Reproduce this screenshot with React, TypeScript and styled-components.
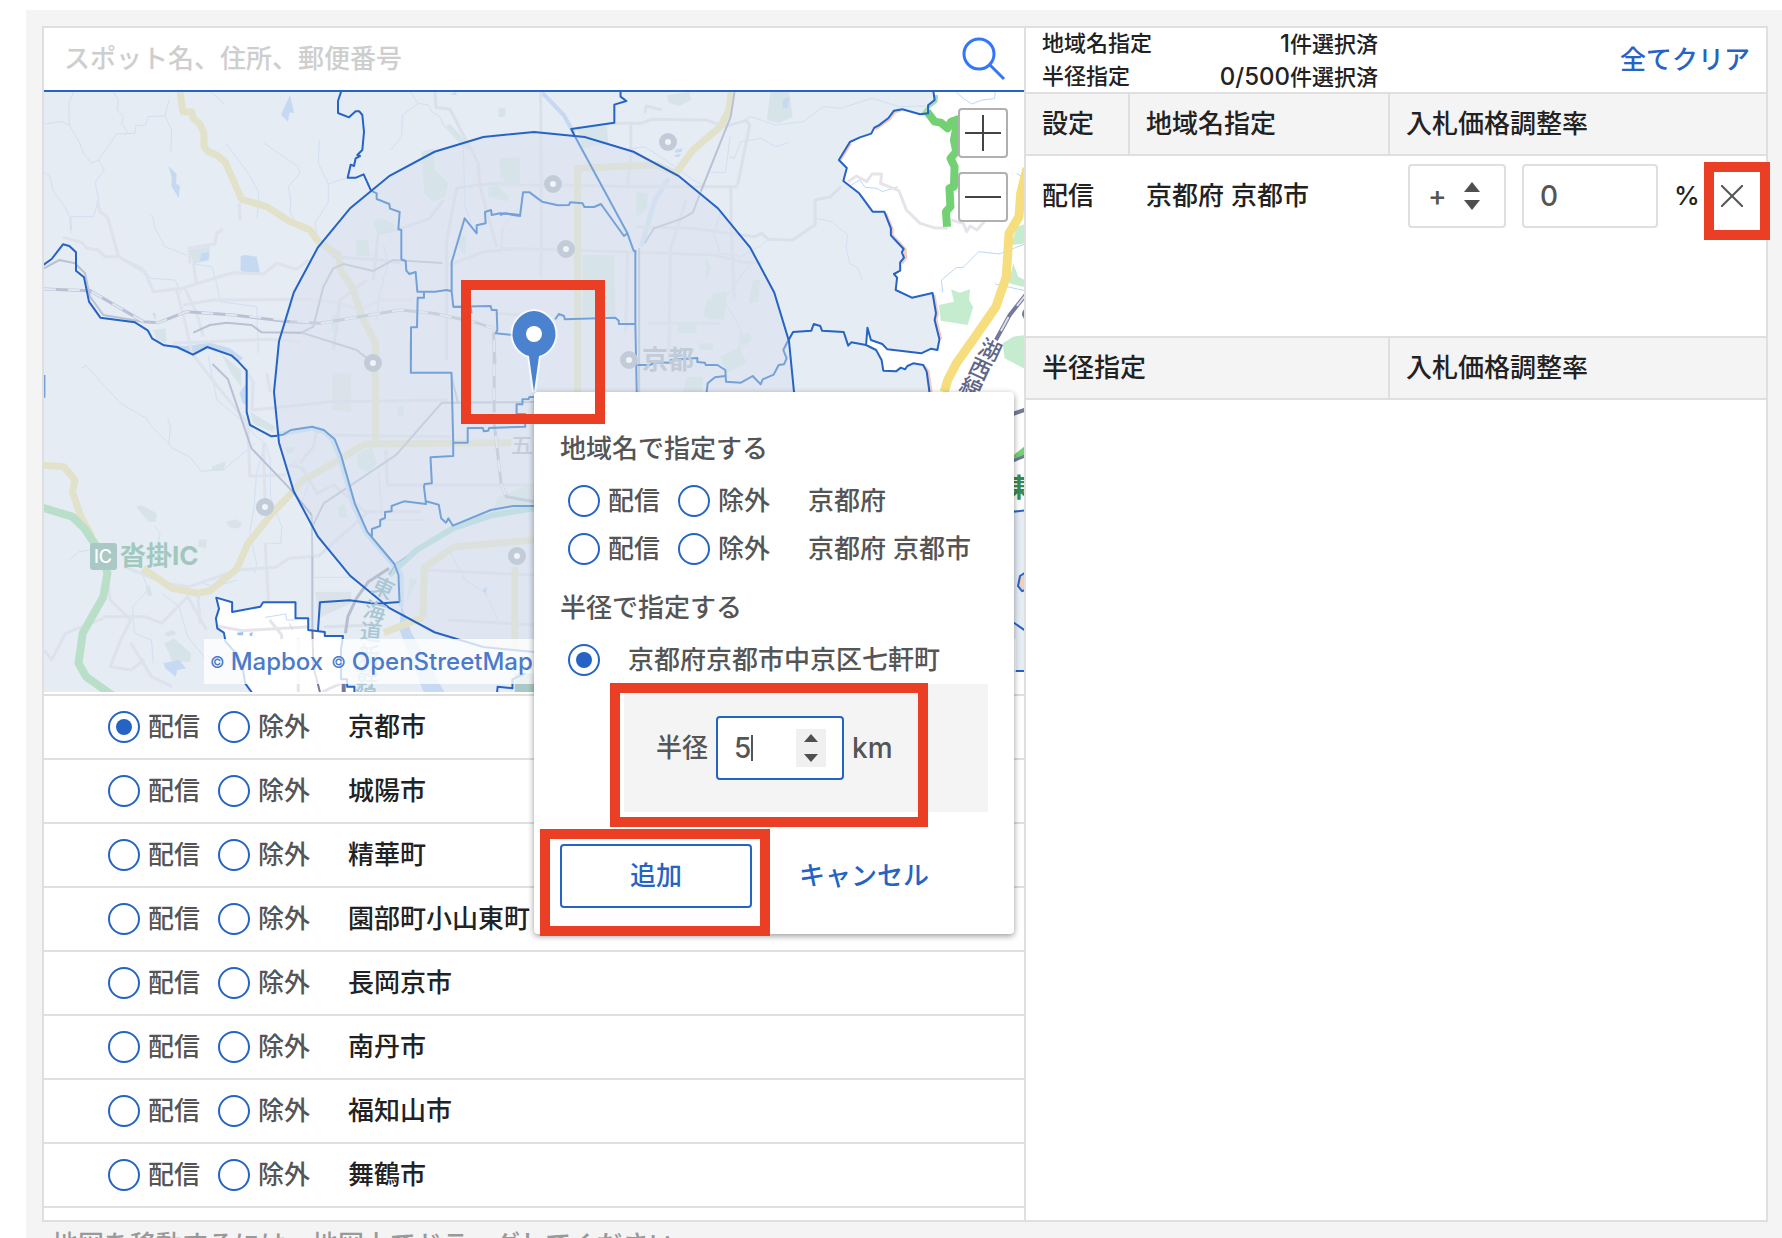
import React, { useState } from "react";
import styled, { createGlobalStyle } from "styled-components";

const BLUE = "#2563c4";
const LINE = "#dfdfdf";
const GRAY = "#f4f4f4";
const INK = "#222";
const SUB = "#555";

const GlobalStyle = createGlobalStyle`
  *, *::before, *::after { box-sizing: border-box; }
  body {
    margin: 0;
    background: #fff;
    color: ${INK};
    font-family: Inter, "Noto Sans CJK JP", sans-serif;
    font-size: 26px;
    font-weight: 500;
    line-height: 38px;
  }
  button, input, select { font: inherit; color: inherit; margin: 0; }
  h2, p, ul, dl, dd, dt, fieldset { margin: 0; padding: 0; border: 0; font: inherit; }
`;

const Page = styled.main`
  height: 100vh;
  overflow: hidden;
  padding: 10px 0 0 26px;
`;

const Surface = styled.div`
  min-height: 100%;
  padding: 16px 14px 0 16px;
  background: ${GRAY};
`;

const Frame = styled.div`
  display: grid;
  grid-template-columns: minmax(0, 1fr) 742px;
  border: 2px solid ${LINE};
  background: #fff;
`;

const Note = styled.p`
  padding: 4px 10px;
  color: #999;
  white-space: nowrap;
`;

/* ---------- left column ---------- */

const SearchBar = styled.form`
  display: flex;
  align-items: center;
  height: 64px;
  padding: 0 18px 0 20px;
  border-bottom: 2px solid ${BLUE};
`;

const SearchInput = styled.input`
  flex: 1;
  min-width: 0;
  padding: 0;
  border: 0;
  outline: 0;
  background: transparent;
  &::placeholder { color: #cecece; opacity: 1; }
`;

const PlainButton = styled.button`
  display: flex;
  align-items: center;
  justify-content: center;
  padding: 0;
  border: 0;
  background: transparent;
  color: ${BLUE};
  cursor: pointer;
`;

const MapArea = styled.section`
  position: relative;
  height: 600px;
  margin-bottom: 2px;
`;

const MapSvg = styled.svg`
  display: block;
  width: 100%;
  height: 100%;
`;

const ZoomGroup = styled.div`
  position: absolute;
  top: 16px;
  right: 16px;
  display: grid;
  gap: 14px;
`;

const ZoomButton = styled(PlainButton)`
  width: 50px;
  height: 50px;
  border: 2px solid #b0b0b0;
  border-radius: 4px;
  background: #fff;
`;

const Credits = styled.div`
  position: absolute;
  left: 160px;
  right: 8px;
  bottom: 8px;
  display: flex;
  align-items: center;
  gap: 8px;
  height: 45px;
  padding-left: 6px;
  background: rgba(255, 255, 255, 0.78);
  font-size: 24px;
`;

const Credit = styled.a`
  display: flex;
  align-items: center;
  gap: 6px;
  color: #4b7acb;
  text-decoration: none;
`;

const Mark = styled.small`
  font-size: 16px;
`;

const AreaList = styled.ul`
  list-style: none;
  margin-bottom: 12px;
  border-bottom: 2px solid ${LINE};
`;

const AreaItem = styled.li`
  height: 64px;
  padding-left: 64px;
  border-top: 2px solid ${LINE};
`;

const Choice = styled.div`
  display: flex;
  align-items: center;
  gap: 18px;
  height: 100%;
`;

const RadioLabel = styled.label<{ $gap?: number }>`
  display: flex;
  align-items: center;
  gap: ${(p) => p.$gap ?? 8}px;
  color: ${SUB};
  white-space: nowrap;
`;

const Radio = styled.input`
  display: grid;
  place-items: center;
  width: 32px;
  height: 32px;
  appearance: none;
  border: 2px solid ${BLUE};
  border-radius: 50%;
  background: #fff;
  &:checked::before {
    content: "";
    width: 16px;
    height: 16px;
    border-radius: 50%;
    background: ${BLUE};
  }
`;

const AreaName = styled.span<{ $soft?: boolean }>`
  margin-left: 20px;
  color: ${(p) => (p.$soft ? SUB : INK)};
  white-space: nowrap;
`;

/* ---------- popup on the map ---------- */

const Popup = styled.section`
  position: absolute;
  z-index: 2;
  top: 50%;
  left: 50%;
  width: 480px;
  padding: 38px 26px 26px;
  border-radius: 4px;
  background: #fff;
  box-shadow: 0 2px 6px rgba(0, 0, 0, 0.4);
  color: ${SUB};
`;

const PopupTitle = styled.h2<{ $spaced?: boolean }>`
  margin: ${(p) => (p.$spaced ? 16 : 0)}px 0 9px;
`;

const PopupRow = styled.div`
  display: flex;
  align-items: center;
  height: 48px;
  padding-left: 8px;
`;

const RadiusBox = styled.div`
  position: relative;
  display: flex;
  align-items: center;
  gap: 8px;
  height: 128px;
  margin-left: 64px;
  padding-left: 32px;
  background: ${GRAY};
`;

const Unit = styled.span`
  font-size: 28px;
`;

const Field = styled.span`
  position: relative;
  display: inline-flex;
  flex: none;
  align-items: center;
`;

const TextBox = styled.input<{ $active?: boolean; $w: number }>`
  flex: none;
  width: ${(p) => p.$w}px;
  height: 64px;
  padding: 0 16px;
  border: 2px solid ${(p) => (p.$active ? BLUE : LINE)};
  border-radius: 4px;
  outline: 0;
  background: #fff;
  color: ${SUB};
  font-size: 28px;
  appearance: textfield;
  &::-webkit-inner-spin-button { display: none; }
`;

const Caret = styled.i`
  position: absolute;
  left: 35px;
  width: 2px;
  height: 26px;
  background: ${SUB};
`;

const Stepper = styled.span`
  position: absolute;
  right: 18px;
  display: flex;
  align-items: center;
  justify-content: center;
  width: 30px;
  height: 38px;
  background: #f0f0f0;
`;

const Actions = styled.div`
  display: flex;
  gap: 16px;
  margin-top: 32px;
`;

const ActionButton = styled(PlainButton)<{ $outlined?: boolean }>`
  position: relative;
  width: 192px;
  height: 64px;
  border: 2px solid ${(p) => (p.$outlined ? BLUE : "transparent")};
  border-radius: 4px;
`;

/* Red rectangle laid over the part that the guide points at. */
const Highlight = styled.span<{ $x: number; $y: number; $w: number; $h: number }>`
  position: absolute;
  z-index: 3;
  left: ${(p) => p.$x}px;
  top: ${(p) => p.$y}px;
  width: ${(p) => p.$w}px;
  height: ${(p) => p.$h}px;
  border: 10px solid #eb3f25;
  pointer-events: none;
`;

/* ---------- right column ---------- */

const Side = styled.section`
  border-left: 2px solid ${LINE};
`;

const SideHead = styled.header`
  display: flex;
  align-items: center;
  justify-content: space-between;
  height: 66px;
  padding: 0 16px;
  border-bottom: 2px solid ${LINE};
`;

const Counts = styled.dl`
  display: grid;
  grid-template-columns: auto auto;
  justify-content: space-between;
  width: 336px;
  font-size: 22px;
  line-height: 33px;
`;

const CountValue = styled.dd`
  height: 33px;
  text-align: right;
`;

const Figure = styled.span`
  font-size: 24px;
`;

const Table = styled.table`
  width: 100%;
  table-layout: fixed;
  border-collapse: separate;
  border-spacing: 0;
`;

const Th = styled.th<{ $top?: boolean }>`
  height: ${(p) => (p.$top ? 64 : 62)}px;
  padding: 0 14px 0 16px;
  border-top: ${(p) => (p.$top ? 2 : 0)}px solid ${LINE};
  border-bottom: 2px solid ${LINE};
  background: ${GRAY};
  font-weight: 500;
  text-align: left;
  &:not(:last-child) { border-right: 2px solid ${LINE}; }
`;

const Td = styled.td<{ $controls?: boolean }>`
  height: 180px;
  padding: 8px 0 0 ${(p) => (p.$controls ? 18 : 16)}px;
  vertical-align: top;
`;

const CellLine = styled.div`
  display: flex;
  align-items: center;
  gap: 16px;
  height: 64px;
  white-space: nowrap;
`;

const Percent = styled.span`
  flex: none;
  width: 24px;
`;

const Sign = styled.select`
  width: 98px;
  height: 64px;
  padding: 0 18px;
  appearance: none;
  border: 2px solid ${LINE};
  border-radius: 4px;
  background: #fff;
  color: ${SUB};
  font-size: 28px;
`;

const SignArrows = styled.span`
  position: absolute;
  right: 26px;
  display: flex;
  pointer-events: none;
`;

const RemoveButton = styled(PlainButton)`
  position: relative;
  flex: none;
  width: 36px;
  height: 64px;
`;

const Arrows = ({ w, h, tip }: { w: number; h: number; tip: number }) => (
  <svg width={w} height={h} viewBox={`0 0 ${w} ${h}`} fill="#4f4f4f" aria-hidden="true">
    <path d={`M${w / 2} 0L${w} ${tip}H0Z`} />
    <path d={`M${w / 2} ${h}L${w} ${h - tip}H0Z`} />
  </svg>
);

const NS = { vectorEffect: "non-scaling-stroke" as const };

const Lines = ({ d, color, w = 2, dash }: { d: string[]; color: string; w?: number; dash?: string }) => (
  <g fill="none" stroke={color} strokeWidth={w} strokeDasharray={dash} strokeLinejoin="round">
    {d.map((p) => (
      <polyline key={p} points={p} {...NS} />
    ))}
  </g>
);

const Shapes = ({ d, color }: { d: string[]; color: string }) => (
  <g fill={color}>
    {d.map((p) => (
      <polygon key={p} points={p} />
    ))}
  </g>
);

/* The map is charted in four sheets; each one has its own origin and scale. */
const NW = "scale(.33333)";
const NE = "translate(500 0) scale(.34439 .33333)";
const SW = "translate(0 340) scale(.34439 .33333)";
const MID = "translate(440 260) scale(.33333)";

const ring = Array.from({ length: 32 }, (_, i) => {
  const a = (i * Math.PI) / 16;
  return `${(534 + 260 * Math.sin(a)).toFixed(1)},${(392 - 260 * Math.cos(a)).toFixed(1)}`;
}).join(" ");

const eastEdge =
  "1258,270 1262,300 1243,316 1243,340 1220,343 1168,328 1144,332 1128,354 1100,376 1087,383 1078,401 1045,412 1016,426 984,480 1007,504 997,543 1043,580 1082,635 1116,635 1135,685 1135,706 1172,747 1167,757 1173,773 1162,787 1162,812 1144,822 1153,833 1149,870 1196,893 1256,879 1266,940 1262,960 1276,1018 1270,1050 1252,1046 1223,1060 1125,1048 1110,1032 1077,1020 1067,983 1063,1035 1092,1050 1108,1080 1113,1112 1150,1114 1164,1103 1176,1108 1183,1098 1200,1090 1229,1095 1239,1115 1247,1176";

const southHole =
  "733,1060 712,1030 706,990 690,945 655,905 650,878 631,865 627,835 636,806 628,773 674,787 674,816 756,800 764,787 858,787 858,835 895,835 895,870 943,876 943,888 996,888 990,930 990,1018 1008,1018 1008,1040 1029,1040 1029,1060";

const stations = [
  [668, 142],
  [553, 184],
  [566, 249],
  [373, 363],
  [265, 507],
  [517, 556],
  [629, 360],
];

const tokaido: [string, number, number, number][] = [
  ["東", 383, 588, 25],
  ["海", 375, 611, 15],
  ["道", 371, 632, 5],
  ["新", 369, 655, 0],
  ["幹", 367, 678, 0],
  ["線", 366, 696, 0],
];

const kosei: [string, number, number][] = [
  ["湖", 990, 350],
  ["西", 980, 369],
  ["線", 971, 388],
];

const KyotoMap = () => (
  <MapSvg viewBox="44 92 980 600" preserveAspectRatio="xMidYMid slice" role="img" aria-label="京都市の地図">
    <rect x="-956" y="-908" width="2980" height="2600" fill="#e5ecf4" />
    <polygon points={ring} fill="#dfe6f1" />

    <g transform={NW}>
      <Shapes
        color="#d6e4e9"
        d={[
          "1265,455 1300,445 1305,510 1345,550 1335,590 1300,605 1272,580",
          "1337,378 1350,372 1400,425 1408,452 1385,435",
          "1495,325 1516,325 1516,350 1495,352",
          "1498,485 1560,472 1560,545 1520,545 1500,515",
          "1465,560 1490,555 1527,590 1525,605 1465,590",
          "1120,660 1150,655 1185,675 1180,695 1130,698",
          "1068,720 1105,720 1110,768 1068,768",
          "1380,700 1400,710 1395,770 1375,740",
          "570,750 630,740 628,780 580,792",
          "460,990 497,985 500,1030 470,1020",
          "995,945 1018,940 1015,1000 995,990",
        ]}
      />
      <Shapes
        color="#c5d9f2"
        d={[
          "870,285 882,338 868,338 864,365 843,344",
          "505,498 530,522 528,550 540,558 536,594 514,558 515,530",
          "722,768 735,765 770,770 780,818 760,822 722,812",
          "605,760 628,755 625,780 598,785",
          "457,940 466,940 468,960",
          "1352,285 1365,276 1372,284",
          "490,1035 531,1046 579,1068 622,1045 690,1068 714,1085 730,1075 690,1045 630,1028 560,1038",
        ]}
      />
      <Lines
        color="#d2e0f3"
        w={1}
        d={[
          "220,276 207,310 208,375 240,430 250,460 275,490 295,480 313,510 285,547 297,600 280,650 212,650 215,690",
          "132,372 185,365 208,375",
          "295,480 350,402 405,400 408,375 435,378 445,350 495,347 515,390 512,458",
          "340,276 355,300 352,330 370,350 365,370 382,395 375,404",
          "132,517 150,530 160,575 195,620 210,652 212,700",
          "495,347 507,300",
          "635,276 672,311",
          "678,430 745,520 775,575 775,620 770,655",
          "793,430 865,480 895,500 900,520 865,560 872,600 870,635 880,655",
          "958,423 955,490 985,552 985,605 945,670 950,700",
          "985,552 1020,540 1038,535",
          "448,640 460,655 463,680 495,740 560,765",
          "350,765 400,790 430,805 450,835 525,840 545,880",
          "580,792 635,800 650,850 660,905 770,920 775,1060",
          "1230,276 1255,310 1208,345 1205,410 1172,450",
          "1255,310 1285,315 1295,335 1320,350 1330,375 1390,440 1395,620 1415,670",
          "1150,730 1165,790 1150,840 1135,900 1130,960",
          "1560,620 1510,680 1500,760",
        ]}
      />
      <Lines
        color="#dde2ec"
        w={3}
        d={[
          "292,602 300,635 322,650 355,768",
          "188,712 245,727 260,745 295,750 315,770 355,770 435,817 460,875 545,865 675,825 700,818 790,822 830,790 890,808 925,780",
          "570,790 568,745 645,732 650,700 668,688",
          "580,790 590,850",
          "718,610 720,660",
          "530,870 560,985 575,1060",
          "555,865 590,940 610,1010",
          "550,915 640,900 920,898 1000,905 1080,930 1140,900 1240,900",
          "520,1030 800,1018 900,1025",
        ]}
      />
      <Lines
        color="#d9e0eb"
        w={3}
        d={[
          "1305,276 1308,322 1350,328 1435,490 1440,560 1490,740",
          "1340,1080 1340,720 1370,565 1430,555 1560,545",
          "1120,840 1135,700 1190,690 1290,655 1330,600",
          "1350,795 1450,755 1560,745",
          "960,725 1000,770 1140,780 1200,790",
          "1000,1050 1020,900 1100,840",
          "1490,940 1560,945",
        ]}
      />
      <Lines
        color="#e2e2cb"
        w={7}
        d={["540,270 548,335 575,335 580,355 598,370 612,400 612,440 625,455 650,465 675,485 725,598 800,620 865,662 930,690 955,725"]}
      />
      <Lines color="#dde1dc" w={7} d={["955,725 1015,765 1022,810 1060,870 1085,950 1125,1025 1130,1080"]} />
      <Lines
        color="#b9c1d5"
        w={2}
        d={[
          "132,805 178,780 225,790 255,820 270,890 310,945 430,965",
          "580,998 630,975 680,968 755,975 785,997 905,998",
        ]}
      />
      <Lines
        color="#c6d0de"
        w={2}
        d={[
          "905,998 940,980 970,860 1000,805 1030,792 1120,813 1180,780 1327,789",
          "905,998 1070,1050 1120,1090",
        ]}
      />
      <Lines color="#b9c1d5" w={3} d={["132,867 270,872 430,965 475,968 560,935 700,945 870,965"]} />
      <Lines color="#c6d0de" w={3} d={["870,965 960,970 1200,930 1300,940 1420,965 1480,985 1485,1090"]} />
      <Lines
        color="#e3e8f0"
        w={2}
        dash="12 12"
        d={["132,867 270,872 430,965 475,968 560,935 700,945 960,970 1200,930 1300,940 1420,965 1480,985 1485,1090"]}
      />
    </g>

    <g transform={SW}>
      <Shapes color="#dce2ea" d={["915,755 1020,755 1020,790 925,835", "655,545 685,538 702,548 695,565 670,565", "578,600 600,598 598,625 575,620", "965,100 1020,100 1020,215 965,210"]} />
      <Shapes
        color="#d6e4e9"
        d={[
          "395,500 410,495 455,520 453,545 430,545",
          "615,380 655,364 650,392 615,392",
          "478,880 500,870 515,882 485,890",
          "478,910 505,895 555,940 553,965 500,965",
          "422,740 435,735 442,765 430,770",
          "1035,345 1080,320 1095,370 1070,400 1040,380",
          "1155,200 1173,200 1170,230 1155,225",
          "980,500 1000,490 1010,535 985,530",
          "645,45 700,90 700,140 670,100",
          "725,215 800,260 790,275 735,250",
          "1445,470 1551,430 1551,500 1430,520",
          "1190,715 1213,720 1180,790",
          "828,320 858,320 850,340 830,338",
        ]}
      />
      <Shapes color="#c5d9f2" d={["475,970 520,960 540,985 515,990 510,1010 480,985", "695,160 715,130 715,195 705,190", "1165,790 1195,880 1290,1056 1230,1056 1160,870", "1400,750 1415,740 1410,765"]} />
      <Lines
        color="#d2e0f3"
        w={1}
        d={[
          "235,85 250,77 350,190 425,235 440,260 495,315 500,325 550,350 585,394 650,388 740,310",
          "487,235 495,260 490,315",
          "605,50 630,180 700,240 745,290 770,310 745,400 738,500 725,580 745,670 740,700",
          "770,310 785,360 785,470 818,560 815,610 770,610",
          "450,560 465,580 455,625",
          "200,660 230,635 260,630",
          "410,690 430,750 385,800 390,880 440,900 445,970",
          "470,760 520,800 545,890 600,960",
          "590,730 620,740 690,720",
          "912,712 1020,712",
          "1100,400 1110,540 1240,540",
          "1310,640 1350,720 1410,760 1450,850",
          "850,360 900,420 880,480",
        ]}
      />
      <Lines
        color="#dde2ec"
        w={3}
        d={[
          "560,44 640,150 720,250 725,408 830,405",
          "765,310 770,490",
          "770,610 783,840 818,880",
          "710,90 735,125 732,210 800,203",
          "775,100 785,155",
          "360,680 480,730 550,740 690,690 800,682 840,655 925,648",
          "300,830 420,830 470,850 545,770 600,870",
          "310,700 320,780 380,840 350,900 320,980 380,990 420,960",
          "128,930 150,960 190,880 300,835",
          "380,910 440,1010 500,1040",
          "575,760 580,850",
        ]}
      />
      <Lines
        color="#d9e0eb"
        w={3}
        d={[
          "800,203 960,185 1300,180",
          "925,648 1070,515",
          "840,375 880,385 920,460 970,435 1060,515 1220,515",
          "920,270 910,320 870,370",
          "960,285 1310,290",
          "1120,330 1125,435 1551,435",
          "1300,840 1551,855",
          "940,860 1100,855",
          "1230,690 1551,705",
        ]}
      />
      <Lines
        color="#e2e2cb"
        w={7}
        d={[
          "120,375 185,380 218,420 210,455 235,530 268,590",
          "415,685 500,745 575,760 610,752 687,688 720,610 790,520 850,455",
          "1228,832 1115,878",
        ]}
      />
      <Lines
        color="#dde1dc"
        w={7}
        d={["850,455 880,420 950,380 1060,312 1485,308", "1090,0 1090,312", "1551,600 1320,620 1232,682 1228,832", "1495,680 1495,930"]}
      />
      <Lines color="#b9dfc8" w={8} d={["120,502 210,530 245,565 300,650 312,700 300,770 240,880 228,970 250,1010 325,1065"]} />
      <Lines
        color="#b9c1d5"
        w={2}
        d={["617,72 662,118 730,325 850,455 905,525", "907,650 907,880"]}
      />
      <Lines
        color="#c6d0de"
        w={2}
        d={["905,525 907,650", "907,560 940,490 1150,345 1283,188 1551,186", "1311,110 1330,190"]}
      />
      <Lines color="#c6d0de" w={3} d={["1435,0 1435,250 1455,430 1470,470 1551,485"]} />
      <Lines color="#e3e8f0" w={2} dash="12 12" d={["1435,0 1435,250 1455,430 1470,470"]} />
      <Lines color="#cbdff0" w={5} d={["806,284 845,275 906,265 940,275 965,298 985,345 1025,490 1060,575 1140,672 1165,705 1165,800"]} />
      <Lines color="#c3dde5" w={6} d={["1551,505 1430,525 1315,565 1210,630 1130,705"]} />
      <Lines color="#b7becd" w={3} d={["1130,685 1070,725 1035,775 1010,830 1003,880"]} />
      <Lines color="#9dc1ea" w={1} d={["1130,705 1150,670 1180,650"]} />

      <polygon points={southHole} fill="#fff" />
      <Lines color="#e6e4ea" w={3} d={["630,858 705,872 895,860", "783,840 818,885 818,900", "866,895 866,1056", "935,1056 990,1030"]} />
      <Lines color="#c5dbf7" w={1} d={["770,832 830,822 832,840 858,840", "840,850 850,870"]} />
      <Lines color="#767a99" w={2} d={["907,870 910,980 929,1056"]} />
      <Lines color="#767a99" w={4} d={["998,1030 998,1060"]} />
      <Shapes color="#9bc2f3" d={["688,878 706,876 706,886 690,886", "724,880 734,876 732,888 726,888"]} />
      <Shapes color="#a9c8c6" d={["1495,1000 1580,1000 1580,1060 1495,1060"]} />
      <Lines color={BLUE} d={[southHole]} />
      <Lines color={BLUE} d={["1160,786 1090,791 1015,781 929,787 923,876", "1443,1060 1445,1040 1488,1045 1488,1018 1525,1000"]} />
      <Lines
        color="#74a2d8"
        d={[
          "806,286 822,284 845,270 906,260 940,270 972,298 990,345 1030,490 1066,575 1145,672 1157,705 1160,786",
          "1193,0 1193,98 1311,98 1316,308 1358,308 1358,264 1402,264 1405,274 1418,272 1420,264 1525,260 1525,222 1500,222 1500,193 1517,193 1517,178 1535,177 1537,171 1551,171",
          "1316,308 1316,348 1250,352 1254,430 1233,432 1231,440 1237,492 1173,484 1137,498 1137,514 1118,516 1118,534 1104,540 1104,558 1080,567 1080,590",
          "1237,484 1274,494 1281,535 1295,548 1302,535 1315,557 1425,510 1490,498 1551,498",
          "129,105 129,173",
        ]}
      />
    </g>

    <g transform={NE}>
      <Shapes
        color="#d6e4e9"
        d={[
          "485,285 550,276 555,300 520,318 490,308",
          "785,276 840,276 850,350 810,370 775,360",
          "222,380 310,378 315,430 240,445",
          "0,475 50,472 60,540 30,550 0,530",
          "240,765 332,765 335,950 240,950",
          "595,770 615,800 598,845",
          "600,900 660,885 650,960 590,950",
          "735,840 755,840 750,905 722,910",
          "515,970 572,975 570,1000 515,1000",
          "395,575 430,580 425,630 395,650",
        ]}
      />
      <Shapes color="#c5d9f2" d={["820,300 840,290 835,325 822,325", "508,450 530,445 528,455 510,458", "508,465 525,462 522,470 508,470"]} />
      <Lines
        color="#d2e0f3"
        w={1}
        d={[
          "690,370 730,350 800,375 880,365 940,320 990,325 1080,295 1160,320 1235,318",
          "665,470 680,475 700,425 760,415 800,440 838,428",
          "360,450 420,440 480,480 560,540 600,560",
          "915,655 965,665 980,680 1010,705 1005,740 1015,790 1040,805 1052,842",
          "780,715 760,735 700,770 640,760 620,700 640,640",
          "610,517 655,517 668,410",
          "690,1080 700,990 650,900 690,840 730,790",
        ]}
      />
      <Lines color="#c5d9f2" w={4} d={["115,270 185,345 215,400"]} />
      <Lines color="#d3e0f1" w={5} d={["490,535 450,600 410,740"]} />
      <Lines
        color="#dbe1eb"
        w={3}
        d={[
          "118,276 120,600 120,750 118,830",
          "332,370 410,370 440,358 600,360 650,380 715,362 725,375 690,555",
          "380,370 380,470 370,560",
          "0,555 160,555 400,560 690,560",
          "0,745 200,750 620,765 700,785 760,790",
          "670,560 672,700 680,900",
          "395,680 560,685 740,710 760,700 780,718 850,720 900,685 915,675 915,600 960,590 990,560",
          "490,1080 495,750 540,600",
          "430,970 640,970",
          "420,340 425,318 470,330",
          "370,760 365,1000",
        ]}
      />
      <Lines color="#e2e2cb" w={7} d={["672,270 665,330 640,380 560,450 510,520"]} />
      <Lines color="#dde1dc" w={7} d={["510,520 455,495 225,505 225,1180"]} />
      <Lines color="#b9c1d5" w={2} d={["681,276 670,350 583,575"]} />
      <Lines color="#c6d0de" w={2} d={["583,575 560,637 530,655 447,685 420,730", "404,745 404,1180"]} />

      <polygon points={`${eastEdge} 1247,1530 1980,1530 1980,0 1258,0`} fill="#fff" />
      <Shapes
        color="#c6ecd0"
        d={[
          "1310,868 1335,878 1365,868 1362,900 1374,922 1358,975 1280,962 1274,915 1318,905",
          "1490,790 1505,830 1524,840 1524,862 1478,850",
          "1500,680 1524,672 1524,730 1485,735",
          "1460,1030 1490,1010 1530,1005 1530,1110 1465,1075",
        ]}
      />
      <Lines
        color="#b9d8f8"
        w={1}
        d={[
          "1325,276 1345,295 1370,312 1400,300 1436,296 1438,276",
          "1020,555 1045,540 1060,562 1095,565 1110,575 1155,560",
          "1285,878 1282,840 1325,803 1345,802 1390,755 1450,762 1524,732",
          "1438,852 1524,872",
          "1500,520 1524,535",
        ]}
      />
      <Lines
        color="#e6e4ea"
        w={3}
        d={["1010,545 1035,528 1065,545 1080,522 1108,522 1105,550 1158,572 1165,590 1180,630 1220,670 1260,683 1300,685", "1310,660 1345,670 1355,695 1365,678 1385,690 1410,660 1440,655"]}
      />
      <Lines color="#f1cdbd" w={3} d={["1163,330 1146,336 1130,358 1090,387", "1018,430 988,480", "1120,640 1139,687 1139,706 1176,747 1178,773 1167,790", "1260,884 1270,940 1266,960 1280,1018", "1233,1100 1243,1115 1252,1176"]} />
      <Lines color="#a4dbb0" w={3} d={["1268,285 1266,305 1240,325 1225,345"]} />
      <Lines color="#73d073" w={8} d={["1240,335 1262,365 1280,368 1300,385 1310,365 1330,358 1318,420 1325,455 1308,475 1320,500 1318,560 1305,565 1308,620 1295,635 1298,680"]} />
      <Lines color="#f6de7e" w={9} d={["1530,505 1512,580 1507,650 1478,700 1470,830 1440,920 1380,1010 1325,1090 1300,1140 1290,1176"]} />
      <Lines color="#747999" w={4} d={["1530,880 1480,945 1440,1020"]} />
      <Lines color="#dedee6" w={2} dash="16 14" d={["1530,880 1480,945 1440,1020"]} />
      <Lines color={BLUE} d={[eastEdge, "350,270 350,290 367,303 332,314 332,368 207,387 217,408", "838,1020 851,996 904,992 911,972 930,978 935,992 998,996 1011,1037 1020,1027 1063,1035"]} />
      <Lines
        color="#74a2d8"
        d={[
          "217,408 370,700 388,752 393,752 393,970 397,1176",
          "0,645 16,640 38,645 58,648 67,577 86,577 122,605 168,616 200,615 204,607 240,610 245,621 273,621 293,612 360,708 370,700",
          "160,958 171,942 186,948 188,958 335,953 345,962 345,972 393,972",
        ]}
      />
    </g>

    <g transform={MID}>
      <Shapes color="#d6e4e9" d={["820,100 860,95 858,160 815,185 790,160", "900,225 930,220 935,240 905,265", "840,290 900,260 920,310 860,340", "740,350 790,350 785,396 730,396", "775,250 820,250 820,270 780,270"]} />
      <Lines
        color="#74a2d8"
        d={[
          "592,315 630,315 645,307 690,308 692,300 772,294 772,306 795,308 797,315 832,315 856,330 858,365 903,368 938,348 962,373 968,358 1001,344 1016,315 1032,313 1040,295 1030,270 1045,240",
          "856,348 825,352 803,370 800,396",
        ]}
      />
    </g>

    <g transform={NW}>
      <Lines
        color="#74a2d8"
        d={[
          "1113,572 1130,580 1130,597 1168,612 1170,626 1199,636 1195,688 1204,690 1204,778 1217,783 1219,812 1228,822 1247,816 1252,875 1305,875 1340,870 1355,874",
          "1272,877 1272,893 1253,893 1251,982 1233,982 1233,1080",
          "1415,940 1412,922 1360,920 1355,874 1355,787 1394,655 1430,700 1430,676 1457,670 1455,636 1473,630 1475,645 1500,640 1535,642 1560,645",
          "1360,920 1472,918 1475,930 1490,930 1492,990 1487,1000 1545,1006",
        ]}
      />
      <Lines
        color={BLUE}
        d={["1025,270 1014,303 1014,339 1047,352 1067,334 1078,334 1087,345 1092,396 1087,450 1072,465 1080,468 1067,475 1062,498 1052,494 1043,533 1068,533 1091,523 1113,572"]}
      />
      <Lines
        color={BLUE}
        w={2}
        d={["120,802 155,777 189,733 208,738 228,757 228,812 252,832 267,905 301,953 405,967 443,991 457,1016 492,1036 531,1041 579,1064 622,1041 694,1066 714,1084 740,1112 740,1236 750,1275 814,1309 832,1307"]}
      />
    </g>

    <g>
      <rect x="1010" y="510" width="20" height="162" fill="#e5ecf4" />
      <rect x="1010" y="672" width="20" height="20" fill="#fff" />
      <path d="M1010 512L1030 510M1010 620L1030 634M1010 671H1030" stroke={BLUE} strokeWidth="2" fill="none" />
      <path d="M1026 572L1020 576 1018 586 1022 591 1030 589" stroke={BLUE} strokeWidth="2" fill="#f1cdbd" />
      <path d="M1010 415L1030 408" stroke="#747999" strokeWidth="4" />
      <path d="M1010 458L1030 442V456L1010 462Z" fill="#73d073" />
      <path d="M1010 462L1030 454" stroke="#747999" strokeWidth="3" />
      <circle cx="1028" cy="314" r="6" fill="#747999" />
    </g>

    <polygon points={ring} fill="none" stroke={BLUE} strokeWidth="2" />

    <g>
      {stations.map(([x, y]) => (
        <circle key={`${x}-${y}`} cx={x} cy={y} r="6" fill="#f0f3f8" stroke="#c2ccd9" strokeWidth="6" />
      ))}
    </g>
    <g textAnchor="middle" dominantBaseline="central" fontSize="22">
      <g fill="#a9c6d5">
        {tokaido.map(([c, x, y, r]) => (
          <text key={c} x={x} y={y} transform={`rotate(${r} ${x} ${y})`}>
            {c}
          </text>
        ))}
      </g>
      <g fill="#5f6689">
        {kosei.map(([c, x, y]) => (
          <text key={c} x={x} y={y} transform={`rotate(25 ${x} ${y})`}>
            {c}
          </text>
        ))}
      </g>
      <text x="522" y="445" fill="#c4cdda">五</text>
      <text x="668" y="359" fontSize="26" fontWeight="700" fill="#c2ccd9">京都</text>
      <text x="1019" y="487" fontSize="26" fontWeight="700" fill="#3a8a4f">東</text>
    </g>
    <rect x="90" y="543" width="27" height="27" rx="3" fill="#a9c8c6" />
    <text x="103" y="563" textAnchor="middle" fontSize="18" fill="#fff">IC</text>
    <text x="120" y="565" fontSize="26" fontWeight="700" fill="#a1c8bd">沓掛IC</text>

    <g>
      <path
        d="M534 311a23 23 0 0 0-5 45L534 392L539 356a23 23 0 0 0-5-45Z"
        fill="#4a82cf"
        stroke="#fff"
        strokeOpacity=".7"
        strokeWidth="4"
        paintOrder="stroke"
      />
      <circle cx="534" cy="334" r="8" fill="#fff" />
    </g>
  </MapSvg>
);

type Mode = "on" | "off" | "";

const ModePicker = ({ name, area, initial = "", soft }: { name: string; area: string; initial?: Mode; soft?: boolean }) => {
  const [mode, setMode] = useState<Mode>(initial);
  return (
    <Choice role="radiogroup" aria-label={area}>
      <RadioLabel>
        <Radio type="radio" name={name} checked={mode === "on"} onChange={() => setMode("on")} />
        配信
      </RadioLabel>
      <RadioLabel>
        <Radio type="radio" name={name} checked={mode === "off"} onChange={() => setMode("off")} />
        除外
      </RadioLabel>
      <AreaName $soft={soft}>{area}</AreaName>
    </Choice>
  );
};

const areas = ["京都市", "城陽市", "精華町", "園部町小山東町", "長岡京市", "南丹市", "福知山市", "舞鶴市"];

const RadiusPopup = () => (
  <Popup>
    <Highlight $x={-73} $y={-112} $w={144} $h={144} />
    <PopupTitle>地域名で指定する</PopupTitle>
    <PopupRow>
      <ModePicker name="pref" area="京都府" soft />
    </PopupRow>
    <PopupRow>
      <ModePicker name="city" area="京都府 京都市" soft />
    </PopupRow>
    <PopupTitle $spaced>半径で指定する</PopupTitle>
    <PopupRow>
      <RadioLabel $gap={28}>
        <Radio type="radio" name="radius" defaultChecked />
        京都府京都市中京区七軒町
      </RadioLabel>
    </PopupRow>
    <RadiusBox>
      <Highlight $x={-14} $y={-1} $w={318} $h={144} />
      <label htmlFor="radius-km">半径</label>
      <Field>
        <TextBox id="radius-km" type="number" defaultValue={5} $w={128} $active />
        <Caret />
        <Stepper>
          <Arrows w={14} h={28} tip={8} />
        </Stepper>
      </Field>
      <Unit>km</Unit>
    </RadiusBox>
    <Actions>
      <ActionButton type="button" $outlined>
        追加
        <Highlight $x={-22} $y={-17} $w={230} $h={107} />
      </ActionButton>
      <ActionButton type="button">キャンセル</ActionButton>
    </Actions>
  </Popup>
);

export default function App() {
  return (
    <Page>
      <GlobalStyle />
      <Surface>
        <Frame>
          <div>
            <SearchBar onSubmit={(e) => e.preventDefault()}>
              <SearchInput type="text" aria-label="スポット名、住所、郵便番号" placeholder="スポット名、住所、郵便番号" />
              <PlainButton type="submit" aria-label="検索">
                <svg width="44" height="44" viewBox="0 0 44 44" fill="none" stroke="#3176fb" strokeWidth="3">
                  <circle cx="17" cy="17" r="15" />
                  <path d="M28 28L42 42" />
                </svg>
              </PlainButton>
            </SearchBar>
            <MapArea>
              <KyotoMap />
              <ZoomGroup>
                <ZoomButton type="button" aria-label="拡大">
                  <svg width="36" height="36" viewBox="0 0 36 36" stroke="#444" strokeWidth="2">
                    <path d="M0 18H36M18 0V36" />
                  </svg>
                </ZoomButton>
                <ZoomButton type="button" aria-label="縮小">
                  <svg width="36" height="36" viewBox="0 0 36 36" stroke="#444" strokeWidth="2">
                    <path d="M0 18H36" />
                  </svg>
                </ZoomButton>
              </ZoomGroup>
              <Credits>
                <Credit href="#mapbox">
                  <Mark>©</Mark>Mapbox
                </Credit>
                <Credit href="#osm">
                  <Mark>©</Mark>OpenStreetMap
                </Credit>
              </Credits>
              <RadiusPopup />
            </MapArea>
            <AreaList>
              {areas.map((area, i) => (
                <AreaItem key={area}>
                  <ModePicker name={`area-${i}`} area={area} initial={i === 0 ? "on" : ""} />
                </AreaItem>
              ))}
            </AreaList>
          </div>

          <Side>
            <SideHead>
              <Counts>
                <dt>地域名指定</dt>
                <CountValue>
                  <Figure>1</Figure>件選択済
                </CountValue>
                <dt>半径指定</dt>
                <CountValue>
                  <Figure>0/500</Figure>件選択済
                </CountValue>
              </Counts>
              <PlainButton type="button">全てクリア</PlainButton>
            </SideHead>
            <Table>
              <colgroup>
                <col width="104" />
                <col width="260" />
                <col />
              </colgroup>
              <thead>
                <tr>
                  <Th>設定</Th>
                  <Th>地域名指定</Th>
                  <Th>入札価格調整率</Th>
                </tr>
              </thead>
              <tbody>
                <tr>
                  <Td>
                    <CellLine>配信</CellLine>
                  </Td>
                  <Td>
                    <CellLine>京都府 京都市</CellLine>
                  </Td>
                  <Td $controls>
                    <CellLine>
                      <Field>
                        <Sign aria-label="符号" defaultValue="+">
                          <option>+</option>
                        </Sign>
                        <SignArrows>
                          <Arrows w={16} h={28} tip={10} />
                        </SignArrows>
                      </Field>
                      <TextBox type="text" aria-label="入札価格調整率" defaultValue="0" $w={136} />
                      <Percent>%</Percent>
                      <RemoveButton type="button" aria-label="削除">
                        <svg width="22" height="22" viewBox="0 0 22 22" stroke="#555" strokeWidth="2">
                          <path d="M0 0L22 22M22 0L0 22" />
                        </svg>
                        <Highlight $x={-10} $y={-2} $w={66} $h={78} />
                      </RemoveButton>
                    </CellLine>
                  </Td>
                </tr>
              </tbody>
            </Table>
            <Table>
              <colgroup>
                <col width="364" />
                <col />
              </colgroup>
              <thead>
                <tr>
                  <Th $top>半径指定</Th>
                  <Th $top>入札価格調整率</Th>
                </tr>
              </thead>
            </Table>
          </Side>
        </Frame>
        <Note>地図を移動するには、地図上でドラッグしてください</Note>
      </Surface>
    </Page>
  );
}
